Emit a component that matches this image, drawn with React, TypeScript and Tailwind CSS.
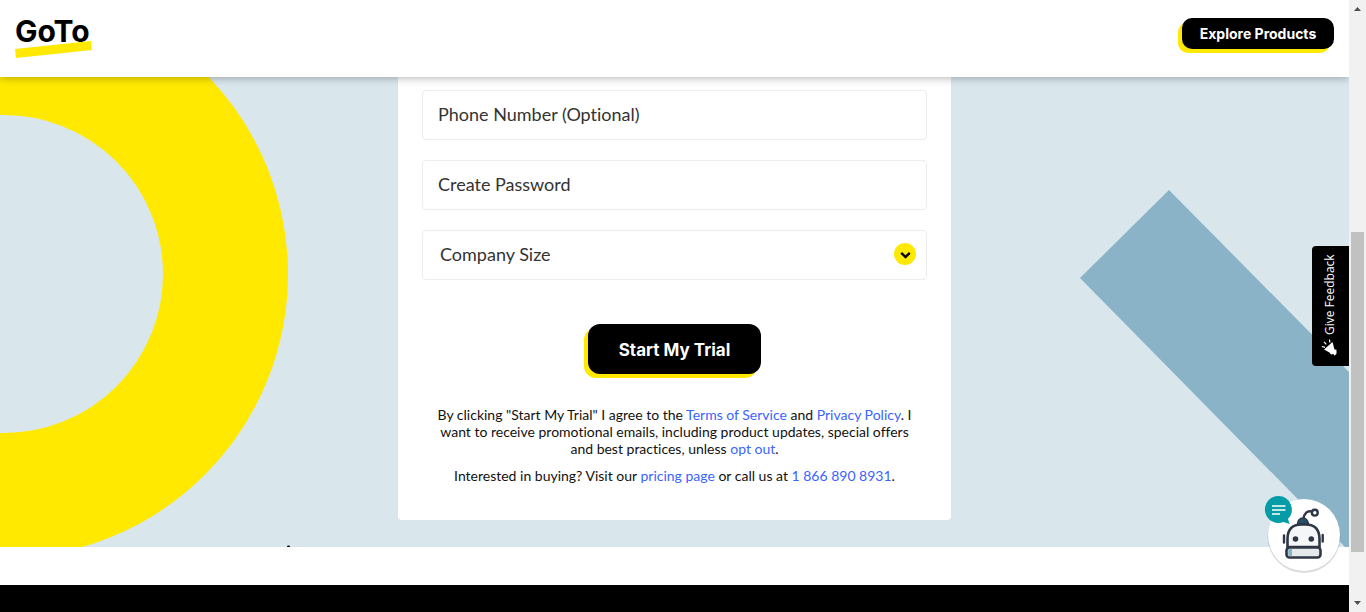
import React from "react";

const fieldClass =
  "block h-[50px] w-full rounded border border-[#ececec] bg-white pb-[2px] text-[18px] font-normal text-[#333] outline-none";

function Logo() {
  return (
    <a href="#" aria-label="GoTo" className="block">
      <svg width="84" height="60" viewBox="0 0 84 60" aria-hidden="true">
        <polygon points="3,49 79,41 80,50 4,58" fill="#ffe900" />
        <text x="3" y="42" fontSize="30" className="fill-black font-['Inter',sans-serif] font-bold">
          GoTo
        </text>
      </svg>
    </a>
  );
}

function Header() {
  return (
    <header className="relative z-10 flex h-[77px] items-start justify-between bg-white pl-3 pr-[15px] shadow-[0_1px_8px_rgba(0,0,0,0.3)]">
      <Logo />
      <button
        type="button"
        className="mt-[18px] h-[31px] w-[152px] rounded-[10px] bg-black font-['Inter',sans-serif] text-[14px] font-bold text-white shadow-[-4px_4px_0_#ffe900]"
      >
        Explore Products
      </button>
    </header>
  );
}

function Backdrop() {
  return (
    <>
      <svg className="absolute left-0 top-0" width="300" height="470" viewBox="0 77 300 470" aria-hidden="true">
        <circle cx="4" cy="274" r="221.5" fill="none" stroke="#ffe900" strokeWidth="125" />
        <ellipse cx="288.5" cy="546.5" rx="1.5" ry="1" fill="#000" />
      </svg>
      <svg className="absolute right-0 top-0" width="270" height="470" viewBox="1079 77 270 470" aria-hidden="true">
        <polygon points="1169,190 1349,372 1349,547 1345,547 1080,278" fill="#8bb3c8" />
      </svg>
    </>
  );
}

function TrialForm() {
  return (
    <form className="relative mx-auto w-[553px] max-w-full rounded-b bg-white px-6 pb-9 pt-[13px]">
      <div className="flex flex-col gap-5">
        <input
          type="tel"
          aria-label="Phone Number (Optional)"
          placeholder="Phone Number (Optional)"
          className={`${fieldClass} px-[15px] placeholder:text-[#333]`}
        />
        <input
          type="password"
          aria-label="Create Password"
          placeholder="Create Password"
          className={`${fieldClass} px-[15px] placeholder:text-[#333]`}
        />
        <div className="relative">
          <select aria-label="Company Size" className={`${fieldClass} appearance-none px-[17px]`}>
            <option>Company Size</option>
          </select>
          <svg
            className="pointer-events-none absolute right-[11px] top-[13px]"
            width="22"
            height="22"
            viewBox="0 0 22 22"
            aria-hidden="true"
          >
            <circle cx="11" cy="11" r="11" fill="#ffe900" />
            <path d="M7.2 9.8 11.5 14l4.300-4.200" fill="none" stroke="#000" strokeWidth="2.4" />
          </svg>
        </div>
      </div>
      <div className="mt-11 flex justify-center">
        <button
          type="button"
          className="h-[50px] w-[173px] rounded-xl bg-black pt-[3px] font-['Inter',sans-serif] text-[17px] font-bold text-white shadow-[-4px_4px_0_#ffe900]"
        >
          Start My Trial
        </button>
      </div>
      <div className="mt-8 whitespace-nowrap text-center text-[14px] leading-[17px] text-[#111]">
        <p>
          By clicking "Start My Trial" I agree to the <TextLink>Terms of Service</TextLink> and{" "}
          <TextLink>Privacy Policy</TextLink>. I
          <br />
          want to receive promotional emails, including product updates, special offers
          <br />
          and best practices, unless <TextLink>opt out</TextLink>.
        </p>
        <p className="mt-[10px]">
          Interested in buying? Visit our <TextLink>pricing page</TextLink> or call us at{" "}
          <TextLink>1 866 890 8931</TextLink>.
        </p>
      </div>
    </form>
  );
}

function TextLink({ children }: { children: React.ReactNode }) {
  return (
    <a href="#" className="text-[#3a64ff]">
      {children}
    </a>
  );
}

function FeedbackTab() {
  return (
    <button
      type="button"
      className="absolute right-[17px] top-[246px] z-20 flex h-[120px] w-[37px] rotate-180 items-center justify-center gap-1 rounded-r bg-black pl-px font-['Open_Sans',sans-serif] text-[12px] text-white [writing-mode:vertical-rl]"
    >
      <svg width="18" height="18" viewBox="0 0 18 18" className="rotate-180" aria-hidden="true">
        <path d="M3 10.500 11.500 3l2 7.500 2 .3v4l-2 2-1-1.700-2.500.3-1.500-1.800z" fill="#fff" />
        <path d="M.8 7.500 4 8.300M3 2.800 5.300 5.300M8.500.5 8.800 3.500" stroke="#fff" strokeWidth="1.200" />
      </svg>
      Give Feedback
    </button>
  );
}

function ChatBot() {
  return (
    <button type="button" aria-label="Chat" className="absolute right-[24px] top-[494px] z-20">
      <svg width="80" height="82" viewBox="1262 494 80 82" aria-hidden="true">
        <circle cx="1304" cy="536.500" r="36.500" fill="#000" opacity=".14" />
        <circle cx="1304" cy="535" r="36" fill="#fff" />
        <path d="M1284 535.500v7M1322.700 535v6.500" stroke="#2f3744" strokeWidth="2.400" strokeLinecap="round" />
        <path d="M1303.500 519c.5-5.500 4-9 8.500-7.300" fill="none" stroke="#2f3744" strokeWidth="2.400" />
        <circle cx="1314.800" cy="512.700" r="2.900" fill="#fff" stroke="#2f3744" strokeWidth="2.400" />
        <path d="M1297.500 524c1-8 9.500-8 11 0z" fill="#24506e" stroke="#2f3744" strokeWidth="1.500" />
        <path
          d="M1287.500 547v-8c0-9.500 5-14.500 14-14.500h4c9 0 14 5 14 14.500v8z"
          fill="#f5f6f8"
          stroke="#2f3744"
          strokeWidth="2.600"
        />
        <rect x="1286.500" y="547.500" width="34" height="10" rx="3" fill="#e4e8eb" stroke="#2f3744" strokeWidth="2.600" />
        <path d="M1288 549h4v7.300h-3.500z" fill="#8bb3c8" />
        <circle cx="1295.500" cy="539" r="2.800" fill="#2f3744" />
        <circle cx="1311.300" cy="539" r="2.800" fill="#2f3744" />
        <path d="M1278.500 496a13.500 13.500 0 1 0 5 26l6 2-1.500-5.200a13.500 13.500 0 0 0-9.500-22.800z" fill="#049ca6" />
        <path d="M1272 506h13.500M1272 510h13.500M1272 514h8" stroke="#fff" strokeWidth="1.600" />
      </svg>
    </button>
  );
}

function ScrollRail() {
  return (
    <div className="relative z-10 flex w-[17px] shrink-0 flex-col items-center bg-[#f1f1f1]" aria-hidden="true">
      <svg className="mt-[7px]" width="7" height="4" viewBox="0 0 7 4">
        <path d="M3.500 0 7 4H0z" fill="#505050" />
      </svg>
      <div className="mt-[221px] h-[320px] w-[13px] bg-[#c1c1c1]" />
      <svg className="mb-[7px] mt-auto" width="7" height="4" viewBox="0 0 7 4">
        <path d="M0 0h7L3.500 4z" fill="#505050" />
      </svg>
    </div>
  );
}

export default function App() {
  return (
    <div className="relative flex min-h-screen font-['Lato',sans-serif] [font-variant-ligatures:none]">
      <div className="flex min-w-0 flex-1 flex-col bg-white">
        <Header />
        <main className="relative overflow-hidden bg-[#d9e6ec] pb-[27px]">
          <Backdrop />
          <TrialForm />
        </main>
        <footer className="mt-[38px] flex-1 bg-black" />
      </div>
      <FeedbackTab />
      <ChatBot />
      <ScrollRail />
    </div>
  );
}
